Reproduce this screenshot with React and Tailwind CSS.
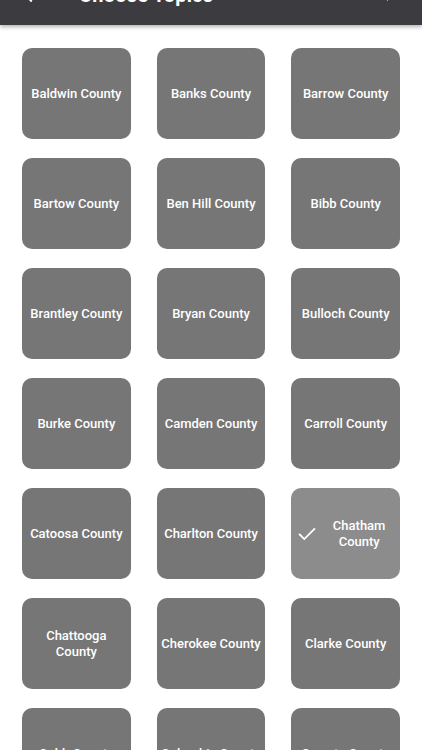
import React from "react";

const counties = [
  "Baldwin County", "Banks County", "Barrow County",
  "Bartow County", "Ben Hill County", "Bibb County",
  "Brantley County", "Bryan County", "Bulloch County",
  "Burke County", "Camden County", "Carroll County",
  "Catoosa County", "Charlton County", "Chatham County",
  "Chattooga County", "Cherokee County", "Clarke County",
  "Cobb County", "Columbia County", "Coweta County",
];

function Check({ className }) {
  return (
    <svg viewBox="0 0 24 24" className={className} fill="none" stroke="currentColor" strokeWidth="2" strokeLinecap="square">
      <path d="M4 12.5l5 5L20 6.5" />
    </svg>
  );
}

export default function App() {
  return (
    <div className="w-[422px] h-[750px] overflow-hidden bg-white" style={{ fontFamily: "Roboto, 'Liberation Sans', sans-serif" }}>
      <div className="relative z-10 h-[25px] overflow-hidden bg-[#3c3b40] shadow-[0_2px_4px_rgba(0,0,0,0.3)]">
        <div className="-mt-[20px] h-[30px] flex items-center text-white">
          <svg viewBox="0 0 24 24" className="ml-[18px] w-[22px] h-[22px]" fill="none" stroke="currentColor" strokeWidth="2.2">
            <path d="M15 5l-7 7 7 7" />
          </svg>
          <div className="ml-[39px] text-[20px] leading-[20px] font-bold tracking-[0.2px]">Choose Topics</div>
          <div className="flex-1" />
          <Check className="mr-[22px] w-[20px] h-[20px]" />
        </div>
      </div>
      <div className="grid grid-cols-3 gap-x-[26px] gap-y-[19px] px-[22px] pt-[23px]">
        {counties.map((c) => {
          const sel = c === "Chatham County";
          return (
            <div
              key={c}
              className={
                "h-[91px] rounded-[10px] flex items-center text-white text-[13px] leading-[16px] font-medium " +
                (sel ? "bg-[#8c8c8c]" : "bg-[#767676]")
              }
            >
              {sel ? (
                <>
                  <Check className="ml-[5px] w-[22px] h-[22px] shrink-0" />
                  <div className="flex-1 text-center px-[6px]">{c}</div>
                </>
              ) : (
                <div className="flex-1 text-center px-[3px]">{c}</div>
              )}
            </div>
          );
        })}
      </div>
    </div>
  );
}
